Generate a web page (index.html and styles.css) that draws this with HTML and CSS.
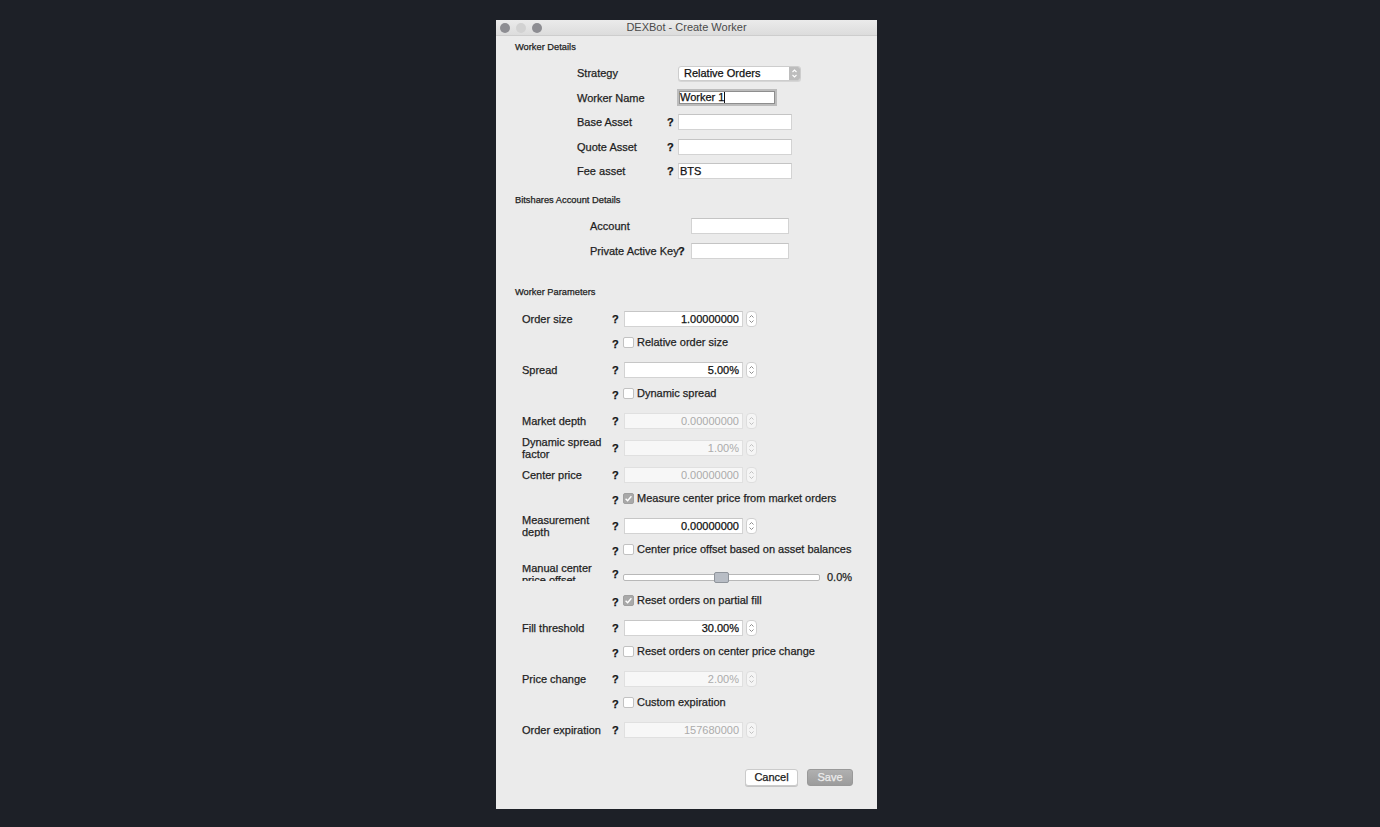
FILE: index.html
```html
<!DOCTYPE html>
<html>
<head>
<meta charset="utf-8">
<title>DEXBot - Create Worker</title>
<link rel="stylesheet" href="styles.css">
</head>
<body>
<div class="stage">
  <div class="window">
    <div class="titlebar">
      <div class="lights">
        <span class="light"></span>
        <span class="light light-mid"></span>
        <span class="light"></span>
      </div>
      <div class="title">DEXBot - Create Worker</div>
      <div class="tb-spacer"></div>
    </div>
    <div class="content">
      <div class="group-title">Worker Details</div>
      <div class="details">
        <div class="lbl">Strategy</div><div></div>
        <div class="combo"><span class="combo-text">Relative Orders</span><span class="combo-arrow"><svg width="11" height="13" viewBox="0 0 11 13"><path d="M3.5 5 L5.5 3 L7.5 5 M3.5 8 L5.5 10 L7.5 8" fill="none" stroke="#ffffff" stroke-width="1.1"/></svg></span></div>
        <div class="lbl">Worker Name</div><div></div>
        <div class="focus-field">Worker 1<span class="caret"></span></div>
        <div class="lbl">Base Asset</div><div class="q">?</div>
        <div class="field w114"></div>
        <div class="lbl">Quote Asset</div><div class="q">?</div>
        <div class="field w114"></div>
        <div class="lbl">Fee asset</div><div class="q">?</div>
        <div class="field w114">BTS</div>
      </div>

      <div class="group-title gt-acct">Bitshares Account Details</div>
      <div class="acct">
        <div class="lbl">Account</div><div></div>
        <div class="field w98"></div>
        <div class="lbl">Private Active Key</div><div class="q">?</div>
        <div class="field w98"></div>
      </div>

      <div class="group-title gt-params">Worker Parameters</div>
      <div class="params">
        <div class="prow">
          <div class="plabel">Order size</div><div class="q pq">?</div>
          <div class="num">1.00000000</div>
          <div class="spinner"><svg width="9" height="14" viewBox="0 0 9 14"><path d="M2.5 5.5 L4.5 3.5 L6.5 5.5 M2.5 8.5 L4.5 10.5 L6.5 8.5" fill="none" stroke="#8c8c8c" stroke-width="1"/></svg></div>
        </div>
        <div class="crow">
          <div class="q cq">?</div><div class="cb"></div><div class="ctext">Relative order size</div>
        </div>
        <div class="prow">
          <div class="plabel">Spread</div><div class="q pq">?</div>
          <div class="num">5.00%</div>
          <div class="spinner"><svg width="9" height="14" viewBox="0 0 9 14"><path d="M2.5 5.5 L4.5 3.5 L6.5 5.5 M2.5 8.5 L4.5 10.5 L6.5 8.5" fill="none" stroke="#8c8c8c" stroke-width="1"/></svg></div>
        </div>
        <div class="crow">
          <div class="q cq">?</div><div class="cb"></div><div class="ctext">Dynamic spread</div>
        </div>
        <div class="prow">
          <div class="plabel">Market depth</div><div class="q pq">?</div>
          <div class="num disabled">0.00000000</div>
          <div class="spinner spin-dis"><svg width="9" height="14" viewBox="0 0 9 14"><path d="M2.5 5.5 L4.5 3.5 L6.5 5.5 M2.5 8.5 L4.5 10.5 L6.5 8.5" fill="none" stroke="#c0c0c0" stroke-width="1"/></svg></div>
        </div>
        <div class="prow">
          <div class="plabel">Dynamic spread factor</div><div class="q pq">?</div>
          <div class="num disabled">1.00%</div>
          <div class="spinner spin-dis"><svg width="9" height="14" viewBox="0 0 9 14"><path d="M2.5 5.5 L4.5 3.5 L6.5 5.5 M2.5 8.5 L4.5 10.5 L6.5 8.5" fill="none" stroke="#c0c0c0" stroke-width="1"/></svg></div>
        </div>
        <div class="prow">
          <div class="plabel">Center price</div><div class="q pq">?</div>
          <div class="num disabled">0.00000000</div>
          <div class="spinner spin-dis"><svg width="9" height="14" viewBox="0 0 9 14"><path d="M2.5 5.5 L4.5 3.5 L6.5 5.5 M2.5 8.5 L4.5 10.5 L6.5 8.5" fill="none" stroke="#c0c0c0" stroke-width="1"/></svg></div>
        </div>
        <div class="crow">
          <div class="q cq">?</div><div class="cb checked"><svg width="11" height="11" viewBox="0 0 11 11"><path d="M2.6 5.8 L4.6 7.8 L8.4 3.2" fill="none" stroke="#ffffff" stroke-width="1.4"/></svg></div><div class="ctext">Measure center price from market orders</div>
        </div>
        <div class="prow">
          <div class="plabel clip-md"><span>Measurement depth</span></div><div class="q pq">?</div>
          <div class="num">0.00000000</div>
          <div class="spinner"><svg width="9" height="14" viewBox="0 0 9 14"><path d="M2.5 5.5 L4.5 3.5 L6.5 5.5 M2.5 8.5 L4.5 10.5 L6.5 8.5" fill="none" stroke="#8c8c8c" stroke-width="1"/></svg></div>
        </div>
        <div class="crow">
          <div class="q cq">?</div><div class="cb"></div><div class="ctext">Center price offset based on asset balances</div>
        </div>
        <div class="prow srow">
          <div class="plabel clip-mc"><div class="clip-inner">Manual center<br>price offset</div></div><div class="q sq">?</div>
          <div class="track"><div class="handle"></div></div>
          <div class="sval">0.0%</div>
        </div>
        <div class="crow">
          <div class="q cq">?</div><div class="cb checked"><svg width="11" height="11" viewBox="0 0 11 11"><path d="M2.6 5.8 L4.6 7.8 L8.4 3.2" fill="none" stroke="#ffffff" stroke-width="1.4"/></svg></div><div class="ctext">Reset orders on partial fill</div>
        </div>
        <div class="prow">
          <div class="plabel">Fill threshold</div><div class="q pq">?</div>
          <div class="num">30.00%</div>
          <div class="spinner"><svg width="9" height="14" viewBox="0 0 9 14"><path d="M2.5 5.5 L4.5 3.5 L6.5 5.5 M2.5 8.5 L4.5 10.5 L6.5 8.5" fill="none" stroke="#8c8c8c" stroke-width="1"/></svg></div>
        </div>
        <div class="crow">
          <div class="q cq">?</div><div class="cb"></div><div class="ctext">Reset orders on center price change</div>
        </div>
        <div class="prow">
          <div class="plabel">Price change</div><div class="q pq">?</div>
          <div class="num disabled">2.00%</div>
          <div class="spinner spin-dis"><svg width="9" height="14" viewBox="0 0 9 14"><path d="M2.5 5.5 L4.5 3.5 L6.5 5.5 M2.5 8.5 L4.5 10.5 L6.5 8.5" fill="none" stroke="#c0c0c0" stroke-width="1"/></svg></div>
        </div>
        <div class="crow">
          <div class="q cq">?</div><div class="cb"></div><div class="ctext">Custom expiration</div>
        </div>
        <div class="prow">
          <div class="plabel">Order expiration</div><div class="q pq">?</div>
          <div class="num disabled">157680000</div>
          <div class="spinner spin-dis"><svg width="9" height="14" viewBox="0 0 9 14"><path d="M2.5 5.5 L4.5 3.5 L6.5 5.5 M2.5 8.5 L4.5 10.5 L6.5 8.5" fill="none" stroke="#c0c0c0" stroke-width="1"/></svg></div>
        </div>
      </div>

      <div class="buttons">
        <div class="btn btn-cancel">Cancel</div>
        <div class="btn btn-save">Save</div>
      </div>
    </div>
  </div>
</div>
</body>
</html>
```

FILE: styles.css
```css
html, body {
  margin: 0;
  padding: 0;
}
body {
  background: #1d2027;
  font-family: "Liberation Sans", Arial, sans-serif;
  color: #1f1f1f;
  height: 827px;
  overflow: hidden;
}
.stage {
  padding: 20px 0 0 496px;
}
.window {
  width: 381px;
  background: #ebebeb;
  -webkit-text-stroke: 0.25px currentColor;
}

/* title bar */
.titlebar {
  height: 15px;
  border-bottom: 1px solid #cdcdcd;
  background: linear-gradient(#ebebeb, #dcdcdc);
  display: grid;
  grid-template-columns: 1fr auto 1fr;
  align-items: center;
}
.lights {
  display: flex;
  gap: 6px;
  padding-left: 4px;
}
.light {
  width: 10px;
  height: 10px;
  border-radius: 50%;
  background: #8d8d92;
}
.light-mid {
  background: #d2d2d2;
}
.title {
  font-size: 11px;
  line-height: 15px;
  color: #4a4a4a;
  -webkit-text-stroke: 0;
}

/* content */
.content {
  padding: 5px 0 23px;
}
.group-title {
  font-size: 9.3px;
  line-height: 12px;
  padding-left: 19px;
  color: #222;
}
.gt-acct {
  margin-top: 10.5px;
}
.gt-params {
  margin-top: 23px;
}
.lbl {
  font-size: 11px;
  color: #1f1f1f;
  white-space: nowrap;
}
.q {
  font-size: 11px;
  font-weight: bold;
  color: #141414;
}

.details {
  margin-top: 8px;
  padding-left: 81px;
  display: grid;
  grid-template-columns: 90px 11px auto;
  grid-auto-rows: 24.5px;
  align-items: center;
}
.acct {
  margin-top: 8px;
  padding-left: 94px;
  display: grid;
  grid-template-columns: 87px 14px auto;
  grid-auto-rows: 24.5px;
  align-items: center;
}
.acct .q {
  padding-left: 1px;
}

.field {
  height: 16px;
  box-sizing: border-box;
  background: #fff;
  border: 1px solid #d3d3d3;
  border-top-color: #c4c4c4;
  font-size: 11px;
  line-height: 14px;
  padding-left: 1px;
  color: #111;
}
.w114 { width: 114px; }
.w98 { width: 98px; }

.focus-field {
  width: 96px;
  height: 13px;
  box-sizing: border-box;
  margin-left: 1px;
  background: #fff;
  border: 1px solid #8e8e8e;
  box-shadow: 0 0 0 2px #bcbcbc;
  font-size: 11px;
  line-height: 11px;
  color: #111;
  display: flex;
  align-items: center;
}
.caret {
  display: inline-block;
  width: 1px;
  height: 11px;
  background: #111;
  margin-left: 0;
}

.combo {
  width: 123px;
  height: 15px;
  box-sizing: border-box;
  background: #fff;
  border: 1px solid #cdcdcd;
  border-radius: 3px;
  box-shadow: 0 1px 0 #d6d6d6;
  display: flex;
  align-items: center;
  justify-content: space-between;
  overflow: hidden;
}
.combo-text {
  font-size: 11px;
  padding-left: 5px;
  color: #111;
}
.combo-arrow {
  width: 11px;
  height: 13px;
  background: #bdbdbd;
  display: flex;
  -webkit-text-stroke: 0;
}

/* parameters */
.params {
  margin-top: 7.5px;
  padding-left: 26px;
  display: flex;
  flex-direction: column;
}
.prow {
  height: 27px;
  display: flex;
  align-items: center;
}
.plabel {
  width: 90px;
  font-size: 11px;
  line-height: 12px;
  color: #1f1f1f;
}
.pq {
  width: 12px;
}
.num {
  width: 119px;
  height: 16px;
  box-sizing: border-box;
  background: #fff;
  border: 1px solid #d3d3d3;
  border-top-color: #c6c6c6;
  font-size: 11px;
  line-height: 14px;
  text-align: right;
  padding-right: 3px;
  color: #111;
}
.num.disabled {
  background: #f7f7f7;
  border-color: #e0e0e0;
  color: #ababab;
  -webkit-text-stroke: 0;
}
.spinner {
  width: 11px;
  height: 16px;
  box-sizing: border-box;
  margin-left: 3px;
  background: #fff;
  border: 1px solid #d0d0d0;
  border-radius: 4px;
  display: flex;
  align-items: center;
  justify-content: center;
}
.spin-dis {
  background: #f5f5f5;
  border-color: #dedede;
}

.crow {
  height: 24px;
  box-sizing: border-box;
  padding-top: 3px;
  padding-left: 90px;
  display: flex;
  align-items: flex-start;
}
.cq {
  width: 11px;
  margin-top: 2px;
  line-height: 13px;
}
.cb {
  width: 11px;
  height: 11px;
  box-sizing: border-box;
  margin-top: 1px;
  background: #fff;
  border: 1px solid #c2c2c2;
  border-radius: 2px;
  display: flex;
}
.cb.checked {
  background: #a9a9a9;
  border-color: #a0a0a0;
}
.cb.checked svg {
  margin: -1px;
}
.ctext {
  font-size: 11px;
  line-height: 13px;
  margin-left: 3px;
  color: #1f1f1f;
}

.clip-md {
  height: 21px;
  overflow: hidden;
  display: flex;
  align-items: center;
}
.clip-mc {
  align-self: flex-start;
  height: 16px;
  margin-top: 1.5px;
  overflow: hidden;
}
.clip-inner {
  margin-top: -3.5px;
}
.sq {
  width: 11px;
  align-self: flex-start;
  margin-top: 4px;
}
.track {
  position: relative;
  width: 197px;
  height: 7px;
  box-sizing: border-box;
  background: #fff;
  border: 1px solid #b8b8b8;
  border-radius: 2px;
}
.handle {
  position: absolute;
  left: 90px;
  top: -3px;
  width: 15px;
  height: 11px;
  box-sizing: border-box;
  background: #b8bdc5;
  border: 1px solid #8f949b;
  border-radius: 2px;
}
.sval {
  margin-left: 7px;
  font-size: 11px;
  color: #1f1f1f;
}

/* buttons */
.buttons {
  margin-top: 25.5px;
  padding-right: 24px;
  display: flex;
  justify-content: flex-end;
  gap: 9px;
}
.btn {
  height: 17px;
  box-sizing: border-box;
  border-radius: 3px;
  font-size: 11px;
  line-height: 15px;
  text-align: center;
}
.btn-cancel {
  width: 53px;
  background: #fff;
  border: 1px solid #cbcbcb;
  box-shadow: 0 1px 0 #c4c4c4;
  color: #1a1a1a;
}
.btn-save {
  width: 46px;
  background: linear-gradient(#b0b0b0, #9c9c9c);
  border: 1px solid #999;
  color: #ececec;
}
```
